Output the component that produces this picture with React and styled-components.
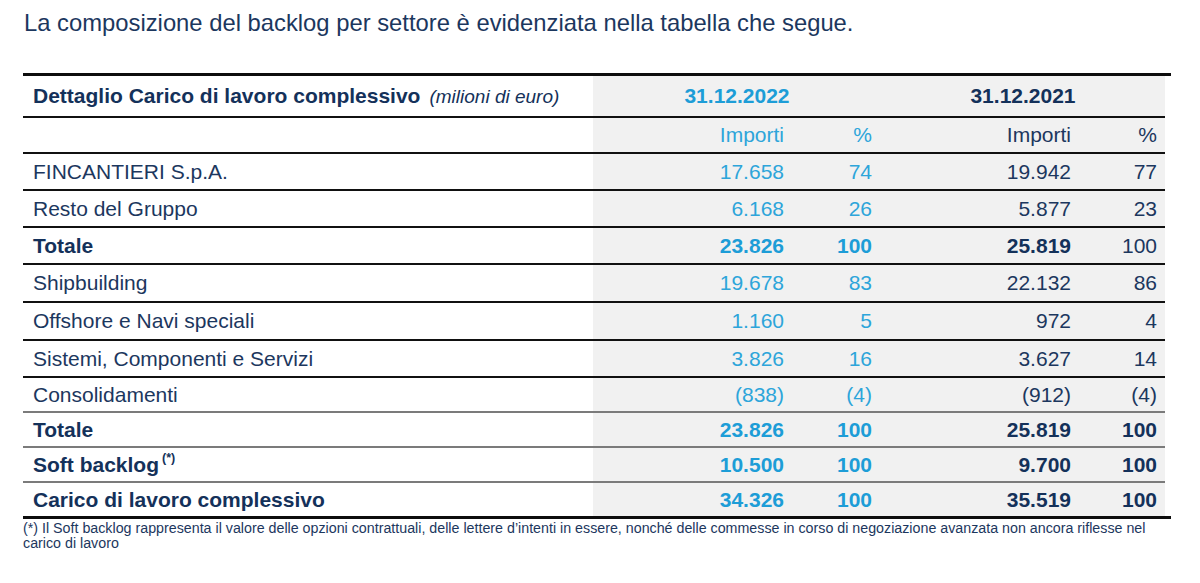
import React from "react";
import styled, { createGlobalStyle } from "styled-components";

const Global = createGlobalStyle`
  html, body { margin: 0; padding: 0; background: #ffffff; }
  body { font-family: "Liberation Sans", Arial, sans-serif; }
  * { box-sizing: border-box; }
`;

const NAVY = "#1c375e";
const NAVY_BOLD = "#14315a";
const BLUE = "#2da5da";
const BLUE_BOLD = "#1d9dd7";
const BAND = "#f1f1f1";

const Page = styled.div`
  width: 1200px;
  height: 583px;
  padding: 9px 23px 0 23px;
  overflow: hidden;
`;

const Title = styled.p`
  margin: 0 0 36px 1px;
  font-size: 23.8px;
  line-height: 28px;
  color: ${NAVY};
`;

const Frame = styled.div`
  width: 1148px;
  border-top: 3px solid #0d0d0d;
  border-bottom: 3px solid #0d0d0d;
`;

const Body = styled.div`
  width: 1142px;
`;

const Row = styled.div`
  display: grid;
  grid-template-columns: 570px 201px 87px 199px 85px;
  height: ${(p) => p.$h}px;
  border-bottom: ${(p) =>
    p.$line === "gray" ? "2px solid #7b7b7b" : p.$line === "none" ? "0" : "2px solid #111"};
`;

const Label = styled.div`
  display: flex;
  align-items: center;
  padding-left: 10px;
  font-size: 21px;
  color: ${(p) => (p.$bold ? NAVY_BOLD : NAVY)};
  font-weight: ${(p) => (p.$bold ? 700 : 400)};
  white-space: nowrap;
`;

const LabelText = styled.span`
  display: inline-block;
`;

const Note = styled.span`
  font-style: italic;
  font-weight: 400;
  font-size: 19px;
  margin-left: 9px;
`;

const Sup = styled.sup`
  font-size: 12.5px;
  font-weight: 700;
  margin-left: 3px;
  vertical-align: 10px;
  line-height: 0;
`;

const Num = styled.div`
  display: flex;
  align-items: center;
  justify-content: flex-end;
  padding-right: ${(p) => p.$pr}px;
  background: ${BAND};
  font-size: 21px;
  font-weight: ${(p) => (p.$bold ? 700 : 400)};
  color: ${(p) =>
    p.$tone === "blue" ? (p.$bold ? BLUE_BOLD : BLUE) : p.$bold ? NAVY_BOLD : NAVY};
  white-space: nowrap;
`;

const DateHead = styled.div`
  grid-column: span 2;
  display: flex;
  align-items: center;
  justify-content: center;
  background: ${BAND};
  font-size: 21px;
  font-weight: 700;
  color: ${(p) => (p.$tone === "blue" ? BLUE_BOLD : NAVY_BOLD)};
`;

const Footnote = styled.p`
  margin: 2px 0 0 0;
  width: 1160px;
  font-size: 14.25px;
  line-height: 15px;
  color: ${NAVY};
`;

const PAD = [10, 9, 9, 8];

const rows = [
  { label: "FINCANTIERI S.p.A.", v: ["17.658", "74", "19.942", "77"], h: 37 },
  { label: "Resto del Gruppo", v: ["6.168", "26", "5.877", "23"], h: 37 },
  { label: "Totale", v: ["23.826", "100", "25.819", "100"], h: 37, bold: true, boldMask: [1, 1, 1, 0] },
  { label: "Shipbuilding", v: ["19.678", "83", "22.132", "86"], h: 38 },
  { label: "Offshore e Navi speciali", v: ["1.160", "5", "972", "4"], h: 38 },
  { label: "Sistemi, Componenti e Servizi", v: ["3.826", "16", "3.627", "14"], h: 37 },
  { label: "Consolidamenti", v: ["(838)", "(4)", "(912)", "(4)"], h: 35, line: "gray" },
  { label: "Totale", v: ["23.826", "100", "25.819", "100"], h: 35, bold: true, line: "gray" },
  { label: "Soft backlog", sup: "(*)", v: ["10.500", "100", "9.700", "100"], h: 35, bold: true, line: "gray" },
  { label: "Carico di lavoro complessivo", v: ["34.326", "100", "35.519", "100"], h: 33, bold: true, line: "none" },
];

export default function App() {
  return (
    <>
      <Global />
      <Page>
        <Title>La composizione del backlog per settore è evidenziata nella tabella che segue.</Title>
        <Frame>
          <Body>
            <Row $h={42}>
              <Label $bold>
                <LabelText>
                  Dettaglio Carico di lavoro complessivo<Note>(milioni di euro)</Note>
                </LabelText>
              </Label>
              <DateHead $tone="blue">31.12.2022</DateHead>
              <DateHead $tone="dark">31.12.2021</DateHead>
            </Row>
            <Row $h={36}>
              <Label />
              <Num $pr={PAD[0]} $tone="blue">Importi</Num>
              <Num $pr={PAD[1]} $tone="blue">%</Num>
              <Num $pr={PAD[2]} $tone="dark">Importi</Num>
              <Num $pr={PAD[3]} $tone="dark">%</Num>
            </Row>
            {rows.map((r, i) => (
              <Row key={i} $h={r.h} $line={r.line}>
                <Label $bold={r.bold}>
                  <LabelText>
                    {r.label}
                    {r.sup && <Sup>{r.sup}</Sup>}
                  </LabelText>
                </Label>
                {r.v.map((val, j) => (
                  <Num
                    key={j}
                    $pr={PAD[j]}
                    $tone={j < 2 ? "blue" : "dark"}
                    $bold={r.bold && (!r.boldMask || r.boldMask[j])}
                  >
                    {val}
                  </Num>
                ))}
              </Row>
            ))}
          </Body>
        </Frame>
        <Footnote>
          (*) Il Soft backlog rappresenta il valore delle opzioni contrattuali, delle lettere d’intenti in essere, nonché delle commesse in corso di negoziazione avanzata non ancora riflesse nel
          <br />
          carico di lavoro
        </Footnote>
      </Page>
    </>
  );
}
